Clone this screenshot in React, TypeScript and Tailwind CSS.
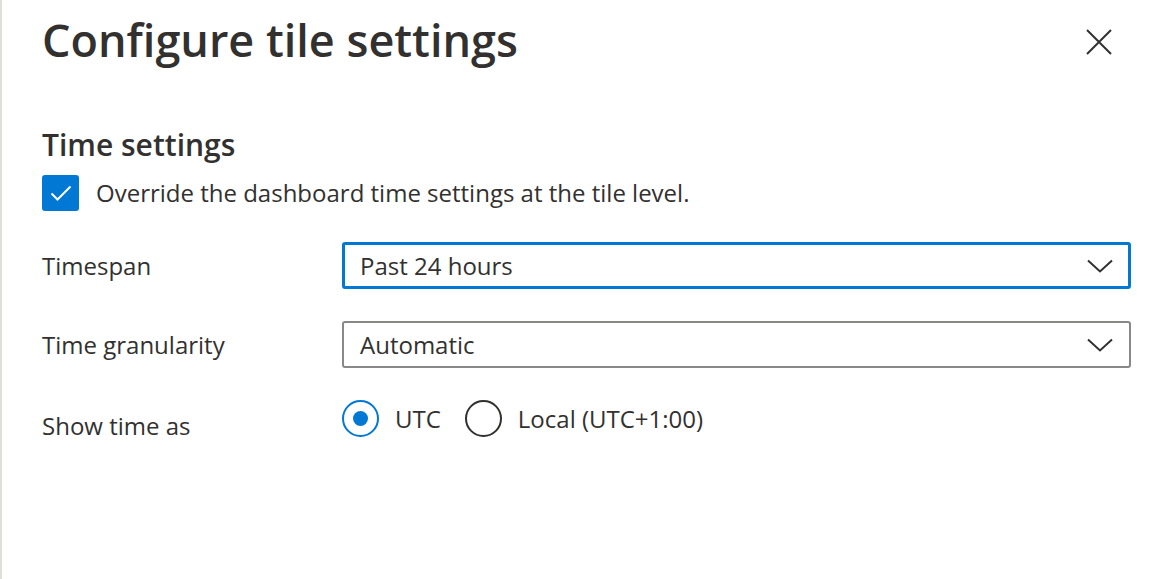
import { useState } from 'react';

const font = { fontFamily: '"Open Sans", "Noto Sans", sans-serif' };

function Chevron() {
  return (
    <svg width="26" height="14" viewBox="0 0 26 14" fill="none">
      <path d="M1 1.5 L13 12.5 L25 1.5" stroke="#323130" strokeWidth="2" />
    </svg>
  );
}

function Dropdown({ value, focused }: { value: string; focused?: boolean }) {
  return (
    <div
      className={
        'flex items-center justify-between h-[47px] rounded-[3px] bg-white ' +
        (focused ? 'border-[3px] border-[#0078d4] pl-[15px] pr-[15px]' : 'border-2 border-[#8a8886] pl-[16px] pr-[16px]')
      }
    >
      <span className="text-[24px] leading-[32px] text-[#323130]">{value}</span>
      <Chevron />
    </div>
  );
}

function Radio({ checked, label, onClick }: { checked: boolean; label: string; onClick: () => void }) {
  return (
    <button onClick={onClick} className="flex items-center gap-[16px] outline-0">
      <span
        className={
          'flex items-center justify-center w-[37px] h-[37px] rounded-full border-2 ' +
          (checked ? 'border-[#0078d4]' : 'border-[#323130]')
        }
      >
        {checked && <span className="w-[15px] h-[15px] rounded-full bg-[#0078d4]" />}
      </span>
      <span className="text-[24px] leading-[32px] text-[#323130]">{label}</span>
    </button>
  );
}

export default function App() {
  const [override, setOverride] = useState(true);
  const [tz, setTz] = useState<'utc' | 'local'>('utc');

  return (
    <div style={font} className="w-[1167px] h-[579px] bg-white border-l-2 border-[#e1dfdd] text-[#323130] overflow-hidden">
      <div className="pl-[40px] pr-[36px]">
        <div className="flex items-start justify-between pt-[10px]">
          <h1 className="text-[45px] font-semibold leading-[60px]">Configure tile settings</h1>
          <button className="mt-[19px] mr-[19px] text-[#323130] outline-0">
            <svg width="26" height="26" viewBox="0 0 26 26" fill="none">
              <path d="M1 1 L25 25 M25 1 L1 25" stroke="#323130" strokeWidth="2" />
            </svg>
          </button>
        </div>

        <h2 className="mt-[55px] text-[30px] font-semibold leading-[40px]">Time settings</h2>

        <label className="mt-[10px] flex items-center gap-[17px] cursor-pointer" onClick={() => setOverride(!override)}>
          <span
            className={
              'flex items-center justify-center w-[37px] h-[36px] rounded-[3px] ' +
              (override ? 'bg-[#0078d4]' : 'border-2 border-[#323130]')
            }
          >
            {override && (
              <svg width="22" height="16" viewBox="0 0 22 16" fill="none">
                <path d="M1.5 8.5 L7.5 14.5 L20.5 1.5" stroke="white" strokeWidth="2" />
              </svg>
            )}
          </span>
          <span className="text-[24px] leading-[32px]">Override the dashboard time settings at the tile level.</span>
        </label>

        <div className="mt-[31px] grid grid-cols-[300px_1fr] gap-y-[32px] items-center">
          <span className="text-[24px] leading-[32px]">Timespan</span>
          <Dropdown value="Past 24 hours" focused />
          <span className="text-[24px] leading-[32px]">Time granularity</span>
          <Dropdown value="Automatic" />
          <span className="self-start text-[24px] leading-[32px] pt-[10px]">Show time as</span>
          <div className="self-start flex items-center gap-[24px]">
            <Radio checked={tz === 'utc'} label="UTC" onClick={() => setTz('utc')} />
            <Radio checked={tz === 'local'} label="Local (UTC+1:00)" onClick={() => setTz('local')} />
          </div>
        </div>
      </div>
    </div>
  );
}
